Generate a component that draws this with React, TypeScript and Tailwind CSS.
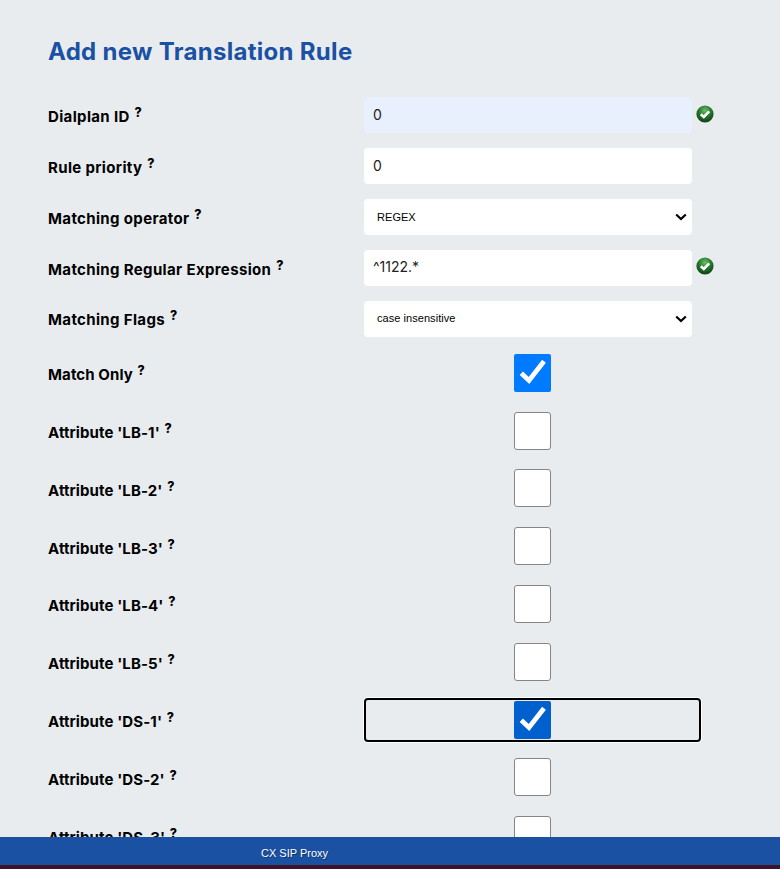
const font = { fontFamily: "Inter, sans-serif" };

function OkIcon() {
  return (
    <svg width="18" height="18" viewBox="0 0 18 18" className="shrink-0 ml-[4px] -mt-[3px]">
      <defs>
        <radialGradient id="okGrad" cx="50%" cy="30%" r="70%">
          <stop offset="0%" stopColor="#6fbb6f" />
          <stop offset="50%" stopColor="#257a2b" />
          <stop offset="100%" stopColor="#0b3f12" />
        </radialGradient>
      </defs>
      <circle cx="9" cy="9" r="8.6" fill="url(#okGrad)" />
      <path d="M4.8 9.2l3 2.7L13.2 6.4" fill="none" stroke="#fff" strokeWidth="2.6" />
    </svg>
  );
}

function Label({ text, check }: { text: string; check?: boolean }) {
  return (
    <div className={`w-[316px] shrink-0 text-[15px] font-bold text-black ${check ? "pt-[5px] tracking-[0.1px]" : "pt-[4px] tracking-[0.35px]"}`}>
      {text} <sup className="text-[12.5px] font-extrabold ml-[1px] -top-[5px]">?</sup>
    </div>
  );
}

function TextRow({ label, value, ok, blue }: { label: string; value: string; ok?: boolean; blue?: boolean }) {
  return (
    <div className="flex items-center h-[50.8px]">
      <Label text={label} />
      <input
        readOnly
        value={value}
        className={`w-[328px] h-[36px] rounded-[4px] px-[9px] pb-[2px] text-[14px] text-[#222] ${blue ? "bg-[#e8f0fe]" : "bg-white"}`}
      />
      {ok && <OkIcon />}
    </div>
  );
}

function SelectRow({ label, value }: { label: string; value: string }) {
  return (
    <div className="flex items-center h-[50.8px]">
      <Label text={label} />
      <div className="relative w-[328px] h-[36px]">
        <select
          defaultValue={value}
          className="appearance-none w-full h-full rounded-[4px] bg-white pl-[13px] text-[11px] tracking-[0.05px] text-black"
          style={{ fontFamily: "'Liberation Sans', sans-serif" }}
        >
          <option>{value}</option>
        </select>
        <svg width="12" height="8" viewBox="0 0 12 8" className="absolute right-[5px] top-[14px]">
          <path d="M1.2 1.5L6 6l4.8-4.5" fill="none" stroke="#000" strokeWidth="2.2" />
        </svg>
      </div>
    </div>
  );
}

function CheckRow({ label, checked, focused }: { label: string; checked?: boolean; focused?: boolean }) {
  return (
    <div className="flex items-center h-[57.8px]">
      <Label text={label} check />
      <div
        className={`w-[337px] h-[44px] flex items-center justify-center rounded-[4px] ${
          focused ? "border-2 border-black shadow-[0_0_0_1px_#fff]" : ""
        }`}
      >
        {checked ? (
          <div className={`w-[37px] h-[38px] rounded-[2px] ${focused ? "bg-[#0060cd]" : "bg-[#007bff]"}`}>
            <svg width="37" height="38" viewBox="0 0 37 38">
              <path d="M7.3 19.3L15 26.5L30 7.2" fill="none" stroke="#fff" strokeWidth="4.8" />
            </svg>
          </div>
        ) : (
          <div className="w-[37px] h-[38px] rounded-[3px] bg-white border border-[#858585]" />
        )}
      </div>
    </div>
  );
}

export default function App() {
  return (
    <div className="relative h-[869px] overflow-hidden bg-[#e9ecef]" style={font}>
      <div className="pl-[48px] pt-[38px]">
        <h1 className="text-[24px] leading-[28px] font-bold text-[#1a51a2] tracking-[0.3px] mb-[24px]">Add new Translation Rule</h1>
        <TextRow label="Dialplan ID" value="0" ok blue />
        <TextRow label="Rule priority" value="0" />
        <SelectRow label="Matching operator" value="REGEX" />
        <TextRow label="Matching Regular Expression" value="^1122.*" ok />
        <SelectRow label="Matching Flags" value="case insensitive" />
        <CheckRow label="Match Only" checked />
        <CheckRow label="Attribute 'LB-1'" />
        <CheckRow label="Attribute 'LB-2'" />
        <CheckRow label="Attribute 'LB-3'" />
        <CheckRow label="Attribute 'LB-4'" />
        <CheckRow label="Attribute 'LB-5'" />
        <CheckRow label="Attribute 'DS-1'" checked focused />
        <CheckRow label="Attribute 'DS-2'" />
        <CheckRow label="Attribute 'DS-3'" />
      </div>
      <div className="absolute inset-x-0 bottom-0">
        <div
          className="h-[28px] bg-[#1a51a2] flex items-center pl-[261px] pt-[4px] text-[11px] text-white [text-shadow:1px_1px_0_rgba(0,0,0,0.35)]"
          style={{ fontFamily: "'Liberation Sans', sans-serif" }}
        >
          CX SIP Proxy
        </div>
        <div className="h-[4px] bg-[#3e1228]" />
      </div>
    </div>
  );
}
